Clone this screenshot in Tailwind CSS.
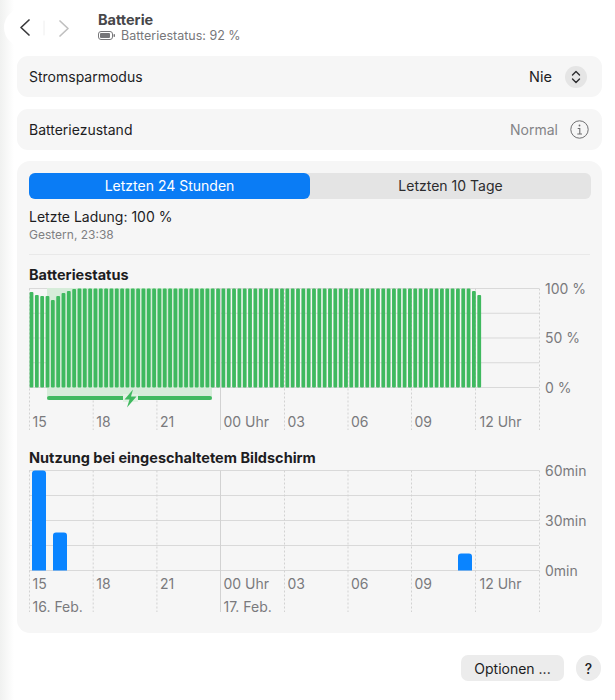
<!DOCTYPE html>
<html lang="de">
<head>
    <meta charset="UTF-8">
    <title>Batterie</title>
    <script src="https://cdn.jsdelivr.net/npm/@tailwindcss/browser@4"></script>
</head>
<body class="w-[615px] h-[700px] overflow-hidden bg-white font-['Inter',sans-serif] text-[#1d1d1f]">
    <div class="h-[700px] bg-linear-to-r from-[#f0f1f0] to-white to-[14px] pl-[17px] pr-[13px] flex flex-col">

        <!-- Header -->
        <div class="h-[56px] flex items-start relative">
            <div class="absolute left-[-13px] top-[8px] w-[80px] h-[39px] rounded-[20px] bg-white flex items-center">
                <svg width="80" height="39" viewBox="0 0 80 39" fill="none" stroke-linecap="round" stroke-linejoin="round">
                    <path d="M25 12 L17 19.5 L25 27" stroke="#3a3a3c" stroke-width="1.7"/>
                    <path d="M40 13 V27" stroke="#eeeeee" stroke-width="1"/>
                    <path d="M56 13 L64 20.5 L56 28" stroke="#c0c0c0" stroke-width="1.7"/>
                </svg>
            </div>
            <div class="ml-[81px] pt-[12px]">
                <div class="text-[14.5px] leading-[16px] font-bold text-[#47474a]">Batterie</div>
                <div class="flex items-center gap-[5px] text-[12.5px] leading-[16px] text-[#77777a]">
                    <svg width="18" height="10" viewBox="0 0 18 10">
                        <rect x="0.5" y="0.5" width="14" height="8" rx="2.5" fill="#fff" stroke="#77777a"/>
                        <rect x="2" y="2" width="10" height="5" rx="1" fill="#77777a"/>
                        <rect x="15.5" y="3" width="1.5" height="3" rx="0.7" fill="#77777a"/>
                    </svg>
                    <span>Batteriestatus: 92 %</span>
                </div>
            </div>
        </div>

        <!-- Settings rows -->
        <div class="h-[41px] rounded-[11px] bg-[#f6f6f6] flex items-center justify-between pl-[12px] pr-[15px] text-[14px]">
            <span>Stromsparmodus</span>
            <div class="flex items-center gap-[13px]">
                <span class="text-[14.5px]">Nie</span>
                <div class="w-[22px] h-[22px] rounded-full bg-[#e5e5e5] flex items-center justify-center">
                    <svg width="10" height="14" viewBox="0 0 10 14" fill="none" stroke="#2c2c2e" stroke-width="1.4" stroke-linecap="round" stroke-linejoin="round">
                        <path d="M1.5 5 L5 1.5 L8.5 5"/>
                        <path d="M1.5 9 L5 12.5 L8.5 9"/>
                    </svg>
                </div>
            </div>
        </div>
        <div class="h-[41px] mt-[12px] pb-[1px] rounded-[11px] bg-[#f6f6f6] flex items-center justify-between pl-[12px] pr-[13px] text-[14px]">
            <span>Batteriezustand</span>
            <div class="flex items-center gap-[12px] text-[#848487]">
                <span>Normal</span>
                <svg width="19" height="19" viewBox="0 0 19 19" fill="none" stroke="#6e6e70">
                    <circle cx="9.5" cy="9.5" r="8.7" stroke-width="1"/>
                    <circle cx="9.5" cy="5.5" r="0.9" fill="#6e6e70" stroke="none"/>
                    <path d="M7.7 8.5 H9.8 V14 M7.3 14 H12" stroke-width="1.1"/>
                </svg>
            </div>
        </div>

        <!-- History card -->
        <div class="h-[472px] mt-[11px] rounded-[13px] bg-[#f6f6f6] px-[12px] pt-[12px]">
            <div class="grid grid-cols-2 h-[26px] rounded-[6px] bg-[#e4e4e4] text-[14px] leading-[26px] text-center w-[562px]">
                <div class="rounded-[6px] bg-[#0a7cf5] text-white">Letzten 24 Stunden</div>
                <div class="text-[#2c2c2e]">Letzten 10 Tage</div>
            </div>
            <div class="mt-[9px] text-[14px] leading-[18px]">Letzte Ladung: 100 %</div>
            <div class="mt-[2px] text-[12px] leading-[14px] text-[#7f7f82]">Gestern, 23:38</div>
            <div class="mt-[12px] border-t border-[#e9e9e9]"></div>

            <div class="mt-[11px] text-[14.5px] leading-[18px] font-bold">Batteriestatus</div>
            <svg id="battery-chart" class="block mt-[4px] overflow-visible" width="562" height="146" viewBox="0 0 562 146"></svg>

            <div class="mt-[15px] text-[14.5px] leading-[18px] font-bold">Nutzung bei eingeschaltetem Bildschirm</div>
            <svg id="usage-chart" class="block mt-[3px] overflow-visible" width="562" height="150" viewBox="0 0 562 150"></svg>
        </div>

        <!-- Footer -->
        <div class="mt-[22px] flex items-center justify-end gap-[12px] pr-[1px]">
            <button class="w-[103px] h-[26px] rounded-[7px] bg-[#ececec] text-[14px] text-[#1d1d1f]">Optionen ...</button>
            <button class="w-[25px] h-[26px] rounded-full bg-[#ececec] text-[14px] font-medium text-[#1d1d1f]">?</button>
        </div>
    </div>

    <script>
        // both charts share the same hour grid; x/y are relative to the svg
        const hours = [0, 63.7, 127.4, 191, 255, 318.5, 382, 446, 510];
        const hourLabels = ['15', '18', '21', '00 Uhr', '03', '06', '09', '12 Uhr'];

        function grid(top, gridBottom, lineBottom, yLabels) {
            let out = '';
            for (let i = 0; i < 5; i++) {
                const y = top + i * (gridBottom - top) / 4;
                out += `<line x1="0" x2="510" y1="${y}" y2="${y}" stroke="#d9d9d9"/>`;
            }
            hours.forEach((x, i) => {
                const midnight = i === 3;
                out += `<line x1="${x + 0.5}" x2="${x + 0.5}" y1="${top}" y2="${lineBottom}" stroke="#d2d2d2" ${midnight ? '' : 'stroke-dasharray="2 2"'}/>`;
            });
            yLabels.forEach((label, i) => {
                const y = top + i * (gridBottom - top) / 2 + 5;
                out += `<text x="516" y="${y}" font-size="14" fill="#7a7a7d">${label}</text>`;
            });
            return out;
        }

        function axisLabels(y) {
            return hourLabels.map((label, i) =>
                `<text x="${hours[i] + (i === 7 ? 4.5 : 3.5)}" y="${y}" font-size="14" fill="#7a7a7d">${label}</text>`).join('');
        }

        // Battery chart
        const dipTops = [4, 7, 8, 8, 12, 8, 5, 3, 1];
        const endTops = { 83: 3, 84: 7 };
        let battery = grid(0.5, 99.5, 142, ['100 %', '50 %', '0 %']);
        battery += '<rect x="18" y="0" width="165" height="112" fill="#d6ecd9"/>';
        let bars = '';
        for (let i = 0; i < 85; i++) {
            const top = dipTops[i] ?? endTops[i] ?? 0.5;
            bars += `<rect x="${0.6 + i * 5.33}" y="${top}" width="3.8" height="${99.5 - top}" rx="1" fill="#3fb95f"/>`;
        }
        battery += bars;
        battery += '<rect x="18" y="108" width="165" height="4" rx="2" fill="#3fb95f"/>';
        battery += '<rect x="94" y="106" width="15" height="8" fill="#e2f1e4"/>';
        battery += '<path d="M104 101.5 L95.5 111.5 H100.5 L98 119.5 L107.5 108.5 H102 Z" fill="#3fb95f"/>';
        battery += axisLabels(139);
        document.getElementById('battery-chart').innerHTML = battery;

        // Screen usage chart
        let usage = grid(0.5, 100.5, 142, ['60min', '30min', '0min']);
        [[3, 0.5], [24, 62.5], [429, 83.5]].forEach(([x, top]) => {
            usage += `<path d="M${x} 100.5 V${top + 3} Q${x} ${top} ${x + 3} ${top} H${x + 11} Q${x + 14} ${top} ${x + 14} ${top + 3} V100.5 Z" fill="#0a84ff"/>`;
        });
        usage += axisLabels(119);
        usage += '<text x="3.5" y="142" font-size="14" fill="#7a7a7d">16. Feb.</text>';
        usage += '<text x="194.5" y="142" font-size="14" fill="#7a7a7d">17. Feb.</text>';
        document.getElementById('usage-chart').innerHTML = usage;
    </script>
</body>
</html>
